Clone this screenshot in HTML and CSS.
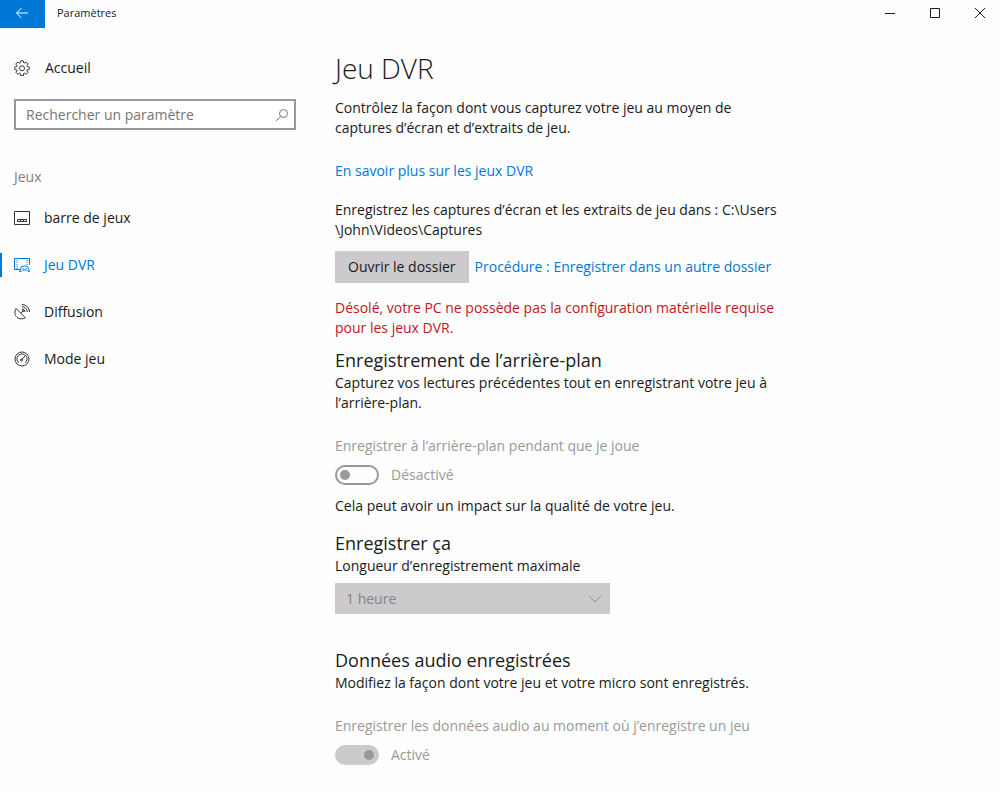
FILE: index.html
```html
<!DOCTYPE html>
<html lang="fr">
  <head>
    <meta charset="utf-8" />
    <title>Paramètres</title>
    <link rel="stylesheet" href="styles.css">
  </head>

  <body>
    <header class="titlebar">
      <button class="back" type="button" aria-label="Retour">
        <svg width="14" height="12" viewBox="0 0 14 12"><path d="M13 6H1.500M6.500 1L1.500 6l5 5" /></svg>
      </button>
      <span class="titlebar-text">Paramètres</span>
      <button class="win-btn" type="button" aria-label="Réduire">
        <svg width="12" height="12" viewBox="0 0 12 12"><path d="M1 6.500h10" /></svg>
      </button>
      <button class="win-btn" type="button" aria-label="Agrandir">
        <svg width="12" height="12" viewBox="0 0 12 12"><path d="M1.500 1.500h9v9h-9z" /></svg>
      </button>
      <button class="win-btn" type="button" aria-label="Fermer">
        <svg width="12" height="12" viewBox="0 0 12 12"><path d="M1 1l10 10M11 1L1 11" /></svg>
      </button>
    </header>

    <div class="page">
      <nav class="sidebar">
        <a class="home" href="#">
          <svg class="icon" width="16" height="16" viewBox="0 0 16 16">
            <path d="M6.500 2.600L6.400 1Q8 .3 9.600 1l-.1 1.600 1.300.6 1.300-1.100q1.500.7 2.100 2.200l-1.300 1.100.4 1.300 1.900.4q.4 1.300 0 2.400l-1.900.3-.5 1.200 1.200 1.300q-.6 1.300-2 2l-1.300-1.200-1.200.6.1 1.700q-1.600.6-3.200 0l.1-1.700-1.200-.6L4 14.300q-1.400-.7-2-2l1.200-1.300-.5-1.200-1.900-.3q-.4-1.100 0-2.400l1.900-.4.4-1.300L1.800 4.300q.6-1.500 2.100-2.200l1.300 1.100z" />
            <circle cx="8" cy="8.300" r="2.500" />
          </svg>
          Accueil
        </a>

        <div class="search">
          <input class="search-input" type="text" placeholder="Rechercher un paramètre" aria-label="Rechercher un paramètre">
          <svg class="search-icon" width="14" height="14" viewBox="0 0 14 14"><circle cx="8.500" cy="5.500" r="4" /><path d="M5.600 8.400L1 13" /></svg>
        </div>

        <h2 class="group">Jeux</h2>
        <a class="item" href="#">
          <svg class="icon" width="16" height="16" viewBox="0 0 16 16"><path d="M.5 1.500h15v13H.5z" /><path d="M3.500 9.500h9v2h-9zM6.500 9.500v2M9.500 9.500v2" /></svg>
          barre de jeux
        </a>
        <a class="item active" href="#">
          <svg class="icon" width="16" height="16" viewBox="0 0 16 16">
            <path d="M6 12.500H.5v-11h15V8" />
            <path d="M3 3v9M13 3v5" stroke-dasharray="1 1" />
            <path d="M7.500 9.500q3-1 6 0l2 5h-1.500L12.500 13h-4L7 14.500H5.500zM8.500 11.500h1M11.500 11.500h1" />
          </svg>
          Jeu DVR
        </a>
        <a class="item" href="#">
          <svg class="icon" width="16" height="16" viewBox="0 0 16 16">
            <path d="M2.200 4.500C.2 7.500.5 11.200 3 13.300c2.300 2 5.700 2.100 8.300.5zM6.800 9.200l2-2M8 5a3 3 0 0 1 3 3M8 2.700A5.300 5.300 0 0 1 13.300 8M8 .5A7.500 7.500 0 0 1 15.500 8" />
            <circle cx="8.900" cy="7.100" r=".7" />
          </svg>
          Diffusion
        </a>
        <a class="item" href="#">
          <svg class="icon" width="16" height="16" viewBox="0 0 16 16">
            <circle cx="8" cy="8" r="7" />
            <path d="M4.800 11.800a5 5 0 1 1 6.400 0M7.500 9L11 5" />
            <circle cx="7.500" cy="9" r="1" />
          </svg>
          Mode jeu
        </a>
      </nav>

      <main class="content">
        <h1>Jeu DVR</h1>
        <p>Contrôlez la façon dont vous capturez votre jeu au moyen de captures d’écran et d’extraits de jeu.</p>
        <p class="spaced"><a class="link" href="#">En savoir plus sur les jeux DVR</a></p>
        <p>Enregistrez les captures d’écran et les extraits de jeu dans : C:\Users<wbr>\John\Videos\Captures</p>
        <div class="folder">
          <button class="btn" type="button">Ouvrir le dossier</button>
          <a class="link" href="#">Procédure : Enregistrer dans un autre dossier</a>
        </div>
        <p class="error">Désolé, votre PC ne possède pas la configuration matérielle requise pour les jeux DVR.</p>

        <section class="first">
          <h2>Enregistrement de l’arrière-plan</h2>
          <p>Capturez vos lectures précédentes tout en enregistrant votre jeu à l’arrière-plan.</p>
          <label class="disabled-label" for="background">Enregistrer à l’arrière-plan pendant que je joue</label>
          <div class="toggle-row">
            <input class="toggle" type="checkbox" id="background" disabled>
            <span>Désactivé</span>
          </div>
          <p class="note">Cela peut avoir un impact sur la qualité de votre jeu.</p>
        </section>

        <section>
          <h2>Enregistrer ça</h2>
          <label class="select-label" for="length">Longueur d’enregistrement maximale</label>
          <div class="select-box">
            <select id="length" disabled>
              <option>1 heure</option>
            </select>
            <svg class="chevron" width="14" height="8" viewBox="0 0 14 8"><path d="M1 1l6 6 6-6" /></svg>
          </div>
        </section>

        <section class="audio">
          <h2>Données audio enregistrées</h2>
          <p>Modifiez la façon dont votre jeu et votre micro sont enregistrés.</p>
          <label class="disabled-label" for="audio">Enregistrer les données audio au moment où j’enregistre un jeu</label>
          <div class="toggle-row">
            <input class="toggle" type="checkbox" id="audio" checked disabled>
            <span>Activé</span>
          </div>
        </section>
      </main>
    </div>
  </body>
</html>
```
FILE: styles.css
```css
* {
    box-sizing: border-box;
}
body {
    margin: 0;
    background-color: #fefefe;
    color: #1a1a1a;
    font: 14px/20px "Open Sans", "Noto Sans", sans-serif;
}
h1, h2, p {
    margin: 0;
}
a {
    color: inherit;
    text-decoration: none;
}
button, input, select {
    font: inherit;
    color: inherit;
}
svg {
    fill: none;
    stroke: currentColor;
}

.titlebar {
    display: flex;
    align-items: center;
    height: 28px;
}
.back {
    display: flex;
    align-items: center;
    justify-content: center;
    width: 45px;
    height: 28px;
    padding: 0 2px 2px 0;
    border: 0;
    background-color: #0078d7;
    color: #fff;
}
.titlebar-text {
    flex: 1;
    padding-left: 12px;
    font-size: 11px;
    line-height: 26px;
    align-self: flex-start;
}
.win-btn {
    display: flex;
    align-items: center;
    justify-content: center;
    align-self: flex-start;
    width: 45px;
    height: 26px;
    padding: 0 0 0 5px;
    border: 0;
    background: none;
}

.page {
    display: flex;
}
.sidebar {
    flex: none;
    width: 310px;
    padding-top: 30px;
}
.home {
    display: flex;
    align-items: center;
    gap: 15px;
    padding-left: 14px;
}
.icon {
    flex: none;
}
.home .icon,
.item .icon {
    color: #333;
}
.search {
    position: relative;
    margin: 21px 14px 0;
}
.search-input {
    display: block;
    width: 100%;
    height: 31px;
    padding: 0 34px 0 10px;
    border: 2px solid #999;
    border-radius: 0;
    background-color: #fff;
}
.search-input::placeholder {
    color: #767676;
    opacity: 1;
}
.search-icon {
    position: absolute;
    top: 9px;
    right: 7px;
    color: #777;
}
.group {
    margin: 37px 0 19px 14px;
    color: #808080;
    font-size: 14px;
    font-weight: 400;
}
.item {
    display: flex;
    align-items: center;
    gap: 14px;
    height: 24px;
    margin-bottom: 23px;
    padding-left: 12px;
    border-left: 2px solid transparent;
}
.item.active,
.active .icon {
    color: #0078d7;
}
.active {
    border-left-color: #0078d7;
}

.content {
    flex: 1;
    max-width: 480px;
    padding: 22px 8px 20px 25px;
}
h1 {
    margin-bottom: 12px;
    font-size: 28px;
    font-weight: 300;
    line-height: 36px;
}
.spaced {
    margin: 23px 0 19px;
}
.link {
    color: #0078d7;
}
.folder {
    display: flex;
    align-items: center;
    gap: 6px;
    margin: 11px 0 15px;
}
.btn {
    height: 32px;
    padding: 0 13px;
    border: 0;
    background-color: #cccacc;
}
.error {
    color: #c4141c;
}
section {
    margin-top: 15px;
}
section h2 {
    margin-bottom: 1px;
    font-size: 18px;
    font-weight: 400;
    line-height: 24px;
}
.first {
    margin-top: 10px;
}
.disabled-label {
    display: block;
    margin: 23px 0 9px;
    color: #999;
}
.toggle-row {
    display: flex;
    align-items: center;
    gap: 12px;
    color: #999;
}
.toggle {
    appearance: none;
    display: flex;
    align-items: center;
    width: 44px;
    height: 20px;
    margin: 0;
    padding: 0 3px;
    border: 2px solid #999;
    border-radius: 10px;
}
.toggle::before {
    content: "";
    width: 10px;
    height: 10px;
    border-radius: 50%;
    background-color: #999;
}
.toggle:checked {
    justify-content: flex-end;
    border-color: #cccacc;
    background-color: #cccacc;
}
.note {
    margin-top: 11px;
}
.select-label {
    display: block;
}
.select-box {
    position: relative;
    width: 275px;
    margin-top: 7px;
}
select {
    appearance: none;
    display: block;
    width: 100%;
    height: 31px;
    padding: 0 11px;
    border: 0;
    border-radius: 0;
    background-color: #cccacc;
    opacity: 1;
}
select:disabled {
    color: #858585;
}
.chevron {
    position: absolute;
    top: 12px;
    right: 8px;
    color: #8f8f8f;
}
.audio {
    margin-top: 34px;
}
```
